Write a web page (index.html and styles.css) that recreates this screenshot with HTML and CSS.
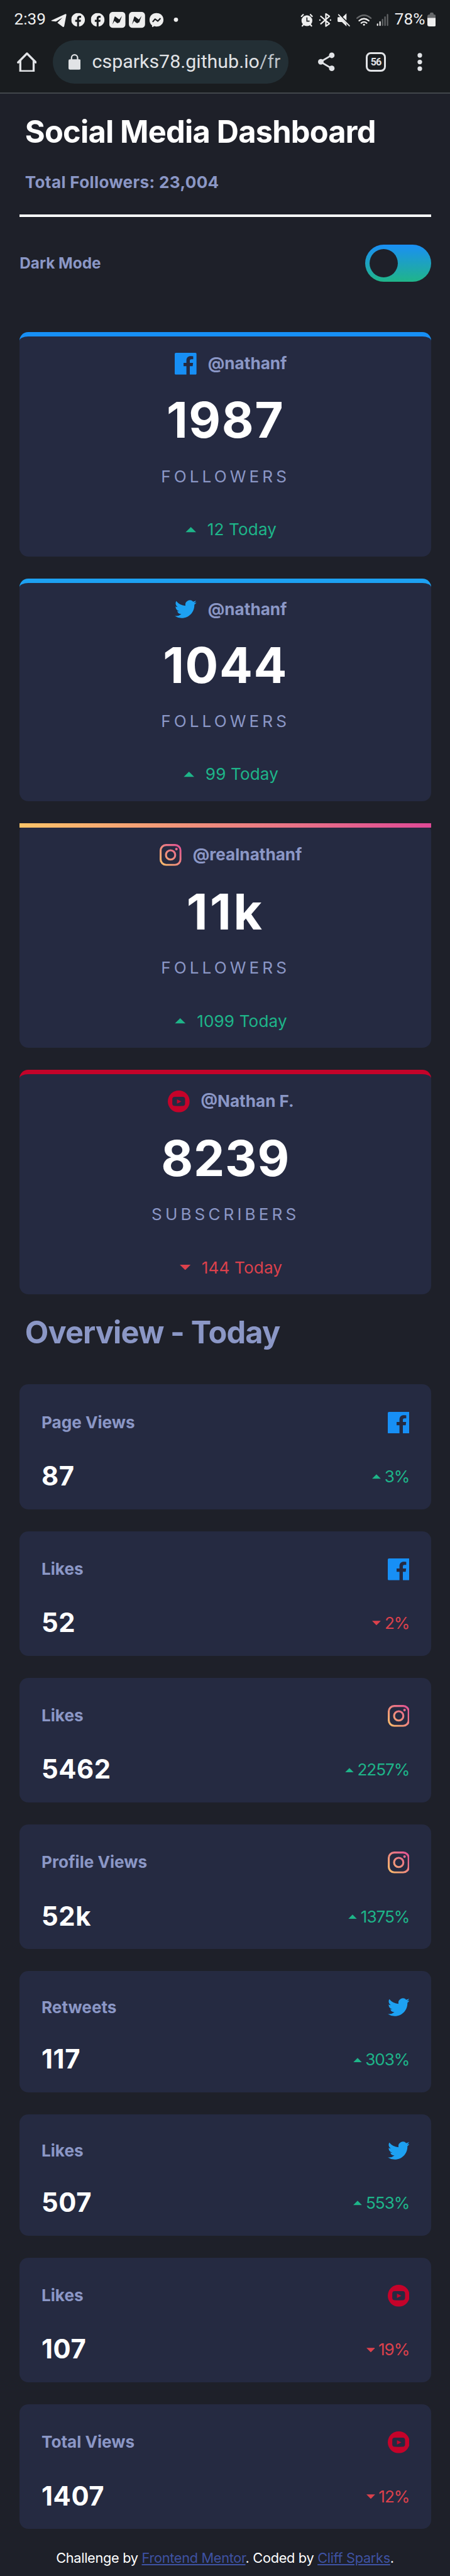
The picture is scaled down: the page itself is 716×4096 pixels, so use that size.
FILE: index.html
```html
<!DOCTYPE html>
<html lang="en">
<head>
<meta charset="utf-8">
<title>Social Media Dashboard</title>
<link rel="stylesheet" href="styles.css">
</head>
<body>
<svg class="defs" width="0" height="0" aria-hidden="true">
  <defs>
    <linearGradient id="ig" x1="0" y1="1" x2="1" y2="0">
      <stop offset="0" stop-color="#fdc468"/><stop offset="1" stop-color="#df4996"/>
    </linearGradient>
    <symbol id="facebook" viewBox="0 0 20 20"><path fill="#178ff5" d="M18.896 0H1.104C.494 0 0 .494 0 1.104v17.793C0 19.506.494 20 1.104 20h9.58v-7.745H8.076V9.237h2.606V7.01c0-2.583 1.578-3.99 3.883-3.99 1.104 0 2.052.082 2.329.119v2.7h-1.598c-1.254 0-1.496.597-1.496 1.47v1.928h2.989l-.39 3.018h-2.6V20h5.098c.608 0 1.102-.494 1.102-1.104V1.104C20 .494 19.506 0 18.896 0z"/></symbol>
    <symbol id="twitter" viewBox="0 0 20 17"><path fill="#1da1f2" d="M20 2.172a8.192 8.192 0 01-2.357.646 4.11 4.11 0 001.805-2.27 8.22 8.22 0 01-2.606.996A4.103 4.103 0 009.85 5.285a11.646 11.646 0 01-8.458-4.287 4.118 4.118 0 001.27 5.478A4.086 4.086 0 01.8 5.963v.052a4.106 4.106 0 003.293 4.023 4.095 4.095 0 01-1.853.07 4.106 4.106 0 003.833 2.85A8.233 8.233 0 010 14.658a11.616 11.616 0 006.29 1.843c7.547 0 11.675-6.252 11.675-11.675 0-.178-.004-.355-.012-.531A8.34 8.34 0 0020 2.172z"/></symbol>
    <symbol id="instagram" viewBox="0 0 20 20"><path fill="url(#ig)" fill-rule="evenodd" d="M5.9 0h8.2A5.9 5.9 0 0120 5.9v8.2a5.9 5.9 0 01-5.9 5.9H5.9A5.9 5.9 0 010 14.1V5.9A5.9 5.9 0 015.9 0zm.1 1.8A4.2 4.2 0 001.8 6v8A4.2 4.2 0 006 18.200h8a4.200 4.200 0 004.200-4.200V6A4.200 4.200 0 0014 1.800zM10 4.865a5.135 5.135 0 110 10.270 5.135 5.135 0 010-10.270zm0 1.802a3.333 3.333 0 100 6.666 3.333 3.333 0 000-6.666zM15.340 3.460a1.200 1.200 0 110 2.400 1.200 1.200 0 010-2.400z"/></symbol>
    <symbol id="youtube" viewBox="0 0 20 20"><path fill="#c4032a" fill-rule="evenodd" d="M10 0a10 10 0 110 20 10 10 0 010-20zM6.400 5.800Q4.100 5.900 4.100 8.100v3.800q0 2.100 2.300 2.200 3.600.1 7.200 0 2.200-.1 2.200-2.200V8.100q0-2.200-2.200-2.300-3.600-.1-7.200 0zM8.400 8.100v3.900l4-1.950z"/></symbol>
    <symbol id="up" viewBox="0 0 8 4"><path fill="#1eb589" d="M0 4l4-4 4 4z"/></symbol>
    <symbol id="down" viewBox="0 0 8 4"><path fill="#dc414c" d="M0 0l4 4 4-4z"/></symbol>
    <symbol id="fb-round" viewBox="0 0 33 33"><path fill="#eee" d="M13.700 32.700V21.300H9.300v-5.100h4.400v-2.800c0-4.500 2.300-6.800 6.300-6.800 1.600 0 2.900.2 3.400.4v4.300h-2.300c-2.300 0-2.700 1-2.700 2.600v2.300h4.800l-.9 5.100h-3.900v11.400A16.500 16.500 0 1013.700 32.700z"/></symbol>
    <symbol id="news" viewBox="0 0 39 39"><rect width="39" height="39" rx="9" fill="#eee"/><path fill="#191c1f" d="M7.500 30.500l5-17q.8-3 3-1.200l8.500 6.200 6.500-8.500-5.500 15q-.6 1.500-2 .6l-2.500 2-3-1.100-5-4.500z"/></symbol>
  </defs>
</svg>

<header class="phone">
  <div class="status">
    <span class="time">2:39</span>
    <svg class="status-left" viewBox="122 27 306 41">
      <path fill="#eee" d="M124 48.500l32-14.900q3.500-1.200 3 2.400l-5 26q-.8 4-4 1.800l-12.500-9.300 12-12.500-15.500 9.500-10-1.300q-2.500-.9 0-1.700z"/>
      <use href="#fb-round" x="171" y="31" width="33" height="33"/>
      <use href="#fb-round" x="218" y="31" width="33" height="33"/>
      <use href="#news" x="262" y="28" width="39" height="39"/>
      <use href="#news" x="309" y="28" width="39" height="39"/>
      <path fill="#eee" d="M375.300 31c9.700 0 16.700 6.800 16.700 16.200S385 63.400 375.300 63.400c-2 0-3.500-.3-5-.8l-4.300 2q-1.300.3-1.400-1.100v-2.800c-4-3-6-8-6-13.500C358.600 37.800 365.600 31 375.300 31z"/>
      <path fill="none" stroke="#191c1f" stroke-width="3.200" stroke-linejoin="round" d="M366 52.500l6-7 6.500 5L385 43.500"/>
      <circle cx="422" cy="47" r="5.100" fill="#eee"/>
    </svg>
    <span class="spacer"></span>
    <svg class="status-right" viewBox="721 29 212 35">
      <g fill="none" stroke="#eee" stroke-linecap="round">
        <path stroke-width="3.400" d="M723.500 38l4-4M749 38l-4-4M729 57l-3.500 4M744 57l3.500 4"/>
        <circle cx="736.500" cy="48.500" r="13" fill="#eee" stroke="none"/>
        <path stroke="#191c1f" stroke-width="2.500" d="M736.500 41.500v8h5.500"/>
        <path stroke-width="3.300" stroke-linejoin="round" d="M770 38l20.500 17.500-8.500 6V32l8.500 6L770 56M767.500 47h.3M793 47h.3"/>
        <path fill="#eee" stroke="none" d="M810 42q0-2 2-2h6l13.500 16v6l-11-10.500h-8q-2.500 0-2.500-2.500zM822.500 39.500l9-8.500v17z"/>
        <path stroke-width="2.600" d="M812.500 34l26 27"/>
        <g stroke-width="3.500">
          <path stroke="#66686a" d="M857 42.500q16.500-14 33 0"/>
          <path d="M862 48.500q11.500-9.500 23 0M867 54q6.500-5 13 0"/>
        </g>
        <circle cx="873.500" cy="58" r="2.300" fill="#eee" stroke="none"/>
        <path stroke-width="3.200" d="M906 56.500v3M912 51.500v8"/>
        <path stroke="#66686a" stroke-width="3.200" d="M918 45.500v14M924 39.500v20M930 34v25.500"/>
      </g>
    </svg>
    <span class="battery-text">78%</span>
    <svg class="battery" viewBox="0 0 21 33"><path fill="#66686a" d="M6 3q0-3 3-3h3q3 0 3 3v1.500q6 0 6 5V15H0V9.500q0-5 6-5z"/><path fill="#eee" d="M0 13h21v15.500q0 4.500-4.500 4.500h-12Q0 33 0 28.500z"/></svg>
  </div>
  <div class="toolbar">
    <svg class="home" viewBox="0 0 48 48"><path fill="none" stroke="#e1e3e6" stroke-width="5" stroke-linejoin="round" stroke-linecap="round" d="M2.700 24.500L24 3l21.300 21.500M8 19.500V45.500h32V19.500"/></svg>
    <div class="url">
      <svg class="lock" viewBox="0 0 29 38"><rect y="12.500" width="29" height="25" rx="3.500" fill="#e1e3e6"/><path fill="none" stroke="#e1e3e6" stroke-width="3.400" d="M7.200 14V9a7.300 7.300 0 0114.600 0v5"/></svg>
      <span class="address">csparks78.github.io<span class="path">/fr</span></span>
    </div>
    <svg class="share" viewBox="0 0 40 46"><path fill="none" stroke="#e1e3e6" stroke-width="4.200" d="M33 7L6 23l27 16"/><g fill="#e1e3e6"><circle cx="33" cy="7.500" r="6.700"/><circle cx="6.700" cy="23" r="6.700"/><circle cx="33" cy="38.700" r="6.700"/></g></svg>
    <span class="tabs">56</span>
    <svg class="more" viewBox="0 0 12 44"><g fill="#e1e3e6"><circle cx="6" cy="6" r="5.500"/><circle cx="6" cy="22" r="5.500"/><circle cx="6" cy="38" r="5.500"/></g></svg>
  </div>
</header>

<main class="page">
  <h1 class="title">Social Media Dashboard</h1>
  <p class="total">Total Followers: 23,004</p>
  <hr class="rule">
  <div class="mode"><span>Dark Mode</span><span class="toggle"><span class="knob"></span></span></div>

  <section class="followers">
    <article class="card card-fb">
      <div class="handle"><svg class="icon"><use href="#facebook"/></svg><span>@nathanf</span></div>
      <div class="count">1987</div><div class="unit">FOLLOWERS</div>
      <div class="today up"><svg class="arrow"><use href="#up"/></svg><span>12 Today</span></div>
    </article>
    <article class="card card-tw">
      <div class="handle"><svg class="icon icon-tw"><use href="#twitter"/></svg><span>@nathanf</span></div>
      <div class="count">1044</div><div class="unit">FOLLOWERS</div>
      <div class="today up"><svg class="arrow"><use href="#up"/></svg><span>99 Today</span></div>
    </article>
    <article class="card card-ig">
      <div class="handle"><svg class="icon"><use href="#instagram"/></svg><span>@realnathanf</span></div>
      <div class="count">11k</div><div class="unit">FOLLOWERS</div>
      <div class="today up"><svg class="arrow"><use href="#up"/></svg><span>1099 Today</span></div>
    </article>
    <article class="card card-yt">
      <div class="handle"><svg class="icon"><use href="#youtube"/></svg><span>@Nathan F.</span></div>
      <div class="count">8239</div><div class="unit">SUBSCRIBERS</div>
      <div class="today down"><svg class="arrow"><use href="#down"/></svg><span>144 Today</span></div>
    </article>
  </section>

  <h2 class="subtitle">Overview - Today</h2>

  <section class="overview">
    <article class="stat"><div class="row"><span class="label">Page Views</span><svg class="icon"><use href="#facebook"/></svg></div><div class="row"><span class="value">87</span><span class="change up"><svg class="mini"><use href="#up"/></svg>3%</span></div></article>
    <article class="stat"><div class="row"><span class="label">Likes</span><svg class="icon"><use href="#facebook"/></svg></div><div class="row"><span class="value">52</span><span class="change down"><svg class="mini"><use href="#down"/></svg>2%</span></div></article>
    <article class="stat"><div class="row"><span class="label">Likes</span><svg class="icon"><use href="#instagram"/></svg></div><div class="row"><span class="value">5462</span><span class="change up"><svg class="mini"><use href="#up"/></svg>2257%</span></div></article>
    <article class="stat"><div class="row"><span class="label">Profile Views</span><svg class="icon"><use href="#instagram"/></svg></div><div class="row"><span class="value">52k</span><span class="change up"><svg class="mini"><use href="#up"/></svg>1375%</span></div></article>
    <article class="stat"><div class="row"><span class="label">Retweets</span><svg class="icon icon-tw"><use href="#twitter"/></svg></div><div class="row"><span class="value">117</span><span class="change up"><svg class="mini"><use href="#up"/></svg>303%</span></div></article>
    <article class="stat"><div class="row"><span class="label">Likes</span><svg class="icon icon-tw"><use href="#twitter"/></svg></div><div class="row"><span class="value">507</span><span class="change up"><svg class="mini"><use href="#up"/></svg>553%</span></div></article>
    <article class="stat"><div class="row"><span class="label">Likes</span><svg class="icon"><use href="#youtube"/></svg></div><div class="row"><span class="value">107</span><span class="change down"><svg class="mini"><use href="#down"/></svg>19%</span></div></article>
    <article class="stat"><div class="row"><span class="label">Total Views</span><svg class="icon"><use href="#youtube"/></svg></div><div class="row"><span class="value">1407</span><span class="change down"><svg class="mini"><use href="#down"/></svg>12%</span></div></article>
  </section>
</main>
<footer class="credit">Challenge by <a href="#">Frontend Mentor</a>. Coded by <a href="#">Cliff Sparks</a>.</footer>
</body>
</html>
```
FILE: styles.css
```css
* { box-sizing: border-box; }

html { font-size: 6.63333px; background: #1e2029; }

body {
  margin: 0;
  height: 4096px;
  overflow: hidden;
  font-family: Inter, sans-serif;
  font-size: 3.94rem;
  line-height: 4.8rem;
  color: #8b97c6;
}

.defs { position: absolute; }
svg { display: block; flex: none; }
h1, h2, p, hr { margin: 0; }

/* Phone status bar and browser toolbar */
.phone {
  height: 22.5rem;
  background: #191c1f;
  border-bottom: 2px solid #41464b;
  font-family: Roboto, sans-serif;
  color: #eee;
}
.status { display: flex; align-items: center; height: 9.6rem; padding: 0 3.4rem 0.2rem 3.4rem; }
.time { width: 8.8rem; font-size: 3.94rem; white-space: nowrap; }
.status-left { width: 30.6rem; height: 4.1rem; }
.spacer { flex: 1; }
.status-right { width: 21.2rem; height: 3.5rem; }
.battery-text { width: 7.8rem; margin-left: 1.4rem; font-size: 3.94rem; white-space: nowrap; }
.battery { width: 2.1rem; height: 3.3rem; }
.toolbar { display: flex; align-items: center; height: 10.5rem; padding-left: 4rem; }
.home { width: 4.8rem; height: 4.8rem; }
.url {
  display: flex;
  align-items: center;
  width: 56.6rem;
  height: 10.5rem;
  margin-left: 3.8rem;
  padding-left: 3.8rem;
  border-radius: 5.25rem;
  background: #232f35;
}
.lock { width: 2.9rem; height: 3.8rem; }
.address { margin-left: 2.8rem; white-space: nowrap; font-size: 4.58rem; line-height: 6.4rem; color: #e1e3e6; }
.path { color: #bcc1c8; }
.share { width: 4rem; height: 4.6rem; margin-left: 7.1rem; }
.tabs {
  width: 4.75rem;
  height: 4.8rem;
  margin-left: 7.5rem;
  border: 3px solid #e1e3e6;
  border-radius: 1.2rem;
  font-size: 2.45rem;
  font-weight: 700;
  line-height: 3.8rem;
  letter-spacing: -0.15rem;
  text-align: center;
  color: #e1e3e6;
}
.more { width: 1.2rem; height: 4.4rem; margin-left: 7.5rem; }

/* Page header */
.page { padding: 0 4.5rem 0 4.7rem; }
.title, .subtitle { padding-left: 1.3rem; font-size: 7.35rem; line-height: 9rem; font-weight: 700; white-space: nowrap; }
.title { padding-top: 4.6rem; letter-spacing: -0.117rem; color: #fff; }
.total { margin-top: 5.25rem; padding-left: 1.3rem; font-weight: 700; letter-spacing: 0.05rem; }
.rule { height: 0.5rem; margin-top: 5.3rem; border: 0; background: #fff; }
.mode { display: flex; align-items: center; justify-content: space-between; margin-top: 6.7rem; font-size: 3.675rem; font-weight: 700; }
.toggle { display: flex; width: 15.8rem; height: 8.9rem; padding: 1.05rem; border-radius: 4.5rem; background: linear-gradient(#1a8ff5, #20b589); }
.knob { width: 6.8rem; height: 6.8rem; border-radius: 50%; background: #1e2029; }

/* Follower cards */
.followers { display: grid; gap: 5.3rem; margin-top: 12.05rem; }
.card {
  padding: 3.9rem 0 4rem;
  border-top: 7px solid;
  border-radius: 2.1rem;
  background: #252a41;
  text-align: center;
}
.card-fb { border-color: #178ff5; }
.card-tw { border-color: #1da1f2; }
.card-ig { border-image: linear-gradient(to right, #fdc468, #df4996) 1; }
.card-yt { border-color: #c4032a; }
.icon { width: 5.25rem; height: 5.25rem; }
.icon-tw { height: 4.46rem; }
.handle, .today { display: flex; align-items: center; justify-content: center; gap: 2.65rem; padding-left: 2.65rem; }
.handle { font-weight: 700; }
.count { margin-top: 3.9rem; font-size: 11.81rem; line-height: 14.3rem; font-weight: 700; letter-spacing: 0.24rem; color: #fff; }
.card-ig .count { letter-spacing: 0.55rem; }
.card-yt .count { letter-spacing: 0.12rem; }
.unit { margin-top: 3.9rem; letter-spacing: 0.765rem; }
.today { margin-top: 7.9rem; letter-spacing: 0.02rem; }
.arrow { width: 2.625rem; height: 1.3rem; }
.up { color: #1eb589; }
.down { color: #dc414c; }

/* Overview cards */
.subtitle { margin-top: 4.75rem; letter-spacing: -0.135rem; }
.overview { display: grid; gap: 5.22rem; margin-top: 7.9rem; }
.stat { padding: 6.5rem 5.25rem 4rem; border-radius: 2.1rem; background: #252a41; }
.row { display: flex; align-items: center; justify-content: space-between; }
.row + .row { height: 7.62rem; margin-top: 6.56rem; }
.label { margin: -0.5rem 0; font-weight: 700; }
.value { font-size: 6.3rem; font-weight: 700; letter-spacing: 0.09rem; color: #fff; }
.change { display: flex; align-items: center; gap: 0.85rem; letter-spacing: -0.16rem; }
.mini { width: 2.1rem; height: 1.15rem; }

.credit { margin-top: 4.75rem; font-size: 3.28rem; line-height: 4.4rem; letter-spacing: -0.047rem; text-align: center; color: #fff; white-space: nowrap; }
.credit a { color: #3e52a3; }
```
